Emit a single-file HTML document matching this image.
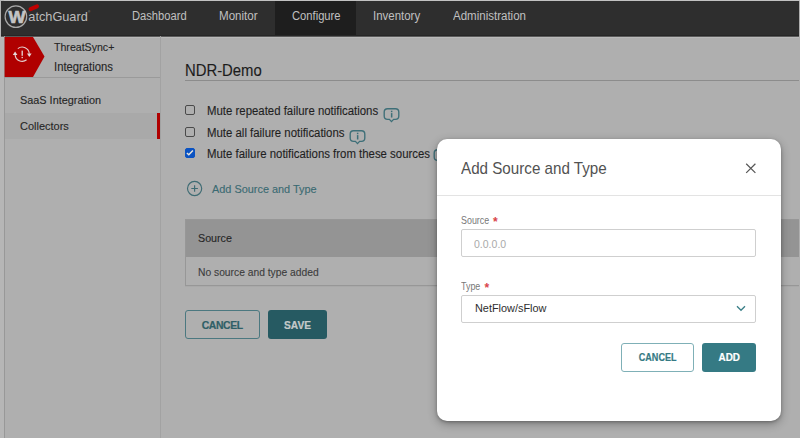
<!DOCTYPE html>
<html>
<head>
<meta charset="utf-8">
<style>
*{margin:0;padding:0;box-sizing:border-box}
html,body{width:800px;height:438px;overflow:hidden}
body{background:#afafaf;font-family:"Liberation Sans",sans-serif;position:relative;color:#222}
.a{position:absolute;white-space:nowrap}
.sx{display:inline-block;transform-origin:0 50%}
#hdr{left:1px;top:1px;width:798px;height:35px;background:#2e2e2e;border-bottom:1px solid #262626}
#cfg{left:275px;top:1px;width:81px;height:34px;background:#1e1e1e}
.nav{height:34px;line-height:32px;font-size:12px;color:#c0c0c0}
#side{left:4px;top:36px;width:157px;height:402px;border-left:1px solid #989898;border-right:1px solid #a2a2a2}
.st{color:#262626}
.cb{width:10px;height:10px;border:1.2px solid #4a4a4a;border-radius:2px;left:185px}
.ct{font-size:12px;color:#1f1f1f;left:207px;line-height:13px}
.teal{color:#3a6a72}
.btn{border-radius:3px;font-weight:bold;text-align:center;-webkit-text-stroke:0.2px currentColor}
#modal{left:437px;top:139px;width:344px;height:281.5px;background:#fff;border-radius:10px;box-shadow:0 1px 3px rgba(0,0,0,0.25),0 3px 10px rgba(0,0,0,0.3)}
.ct,.st,.tx{-webkit-text-stroke:0.12px currentColor}
</style>
</head>
<body>
<!-- header -->
<div class="a" style="left:0;top:0;width:800px;height:1px;background:#c2c2c2"></div>
<div class="a" style="left:0;top:0;width:4px;height:438px;background:#b6b6b6"></div>
<div class="a" id="hdr"></div>
<div class="a" id="cfg"></div>
<div class="a" style="left:1px;top:36px;width:798px;height:1px;background:#5a5a5a"></div>
<div class="a" style="left:1px;top:37px;width:798px;height:1px;background:#bababa"></div>
<!-- logo -->
<svg class="a" style="left:0;top:0" width="100" height="36" viewBox="0 0 100 36">
  <circle cx="15.9" cy="16.6" r="10.8" fill="none" stroke="#a9a9a9" stroke-width="1.2"/>
  <text x="8.4" y="22.6" font-family="Liberation Sans" font-weight="bold" font-size="15.8" fill="#c4c4c4" stroke="#c4c4c4" stroke-width="0.6" textLength="17" lengthAdjust="spacingAndGlyphs">W</text>
  <line x1="30.6" y1="9.1" x2="37" y2="6.4" stroke="#c20000" stroke-width="4" stroke-linecap="round"/>
  <text x="28.3" y="20.7" font-family="Liberation Sans" font-size="13.2" fill="#bcbcbc" textLength="59.5" lengthAdjust="spacingAndGlyphs">atchGuard</text>
  <text x="88" y="13" font-family="Liberation Sans" font-size="3" fill="#999">®</text>
</svg>
<div class="a nav" style="left:131.5px;top:-0.3px"><span class="sx" style="transform:scaleX(0.93)">Dashboard</span></div>
<div class="a nav" style="left:219px;top:-0.3px"><span class="sx" style="transform:scaleX(0.965)">Monitor</span></div>
<div class="a nav" style="left:291.5px;top:-0.3px"><span class="sx" style="transform:scaleX(0.933)">Configure</span></div>
<div class="a nav" style="left:373px;top:-0.3px"><span class="sx" style="transform:scaleX(0.955)">Inventory</span></div>
<div class="a nav" style="left:453px;top:-0.3px"><span class="sx" style="transform:scaleX(0.96)">Administration</span></div>

<!-- sidebar -->
<div class="a" id="side"></div>
<svg class="a" style="left:4px;top:36px" width="42" height="42" viewBox="0 0 42 42">
  <polygon points="0.6,1 29,1 40.5,20.5 29,41 0.6,41" fill="#b00000"/>
  <g fill="none" stroke="#e3d0d0" stroke-width="1.1">
    <path d="M13.83 12.6 A7.1 7.1 0 0 1 25.3 17.8"/>
    <path d="M22.6 23.8 A7.1 7.1 0 0 1 11.1 18.6"/>
  </g>
  <g fill="#e6dada">
    <polygon points="23,17.6 27.6,17.6 25.3,21"/>
    <polygon points="8.8,19 13.4,19 11.1,15.6"/>
    <rect x="17.55" y="14.6" width="1.3" height="5.2"/>
    <rect x="17.55" y="20.9" width="1.3" height="1.3"/>
  </g>
</svg>
<div class="a" style="left:5px;top:77px;width:155px;height:1px;background:#9a9a9a"></div>
<div class="a st" style="left:53.8px;top:40.8px;font-size:11.4px;line-height:12px"><span class="sx" style="transform:scaleX(0.93)">ThreatSync+</span></div>
<div class="a st" style="left:53.8px;top:61px;font-size:12px;line-height:12px"><span class="sx" style="transform:scaleX(0.94)">Integrations</span></div>
<div class="a st" style="left:20.4px;top:92.5px;font-size:11.7px;line-height:14px"><span class="sx" style="transform:scaleX(0.93)">SaaS Integration</span></div>
<div class="a" style="left:5px;top:113px;width:152px;height:25.5px;background:#a9a9a9"></div>
<div class="a" style="left:157px;top:113px;width:3px;height:26px;background:#b00000"></div>
<div class="a st" style="left:20.4px;top:118.8px;font-size:11.8px;line-height:14px"><span class="sx" style="transform:scaleX(0.93)">Collectors</span></div>

<!-- content -->
<div class="a tx" style="left:185px;top:62px;font-size:15.8px;line-height:17px;color:#1c1c1c"><span class="sx" style="transform:scaleX(0.94)">NDR-Demo</span></div>
<div class="a" style="left:185px;top:80px;width:614px;height:1px;background:#8c8c8c"></div>

<div class="a cb" style="top:105px"></div>
<div class="a ct" style="top:104.8px"><span class="sx" style="transform:scaleX(0.95)">Mute repeated failure notifications</span></div>
<div class="a cb" style="top:127px"></div>
<div class="a ct" style="top:126.6px"><span class="sx" style="transform:scaleX(0.95)">Mute all failure notifications</span></div>
<div class="a cb" style="top:148px;background:#0b53c2;border-color:#0b53c2"></div>
<svg class="a" style="left:185px;top:148px" width="10" height="10" viewBox="0 0 10 10"><path d="M1.9 5 L3.8 6.8 L7.9 2.5" fill="none" stroke="#e8e4dc" stroke-width="1.5"/></svg>
<div class="a ct" style="top:147.8px"><span class="sx" style="transform:scaleX(0.95)">Mute failure notifications from these sources</span></div>

<!-- info icons -->
<svg class="a" style="left:383px;top:107px" width="18" height="17" viewBox="0 0 18 17">
  <path d="M4.6 1.7 H12.4 A3.4 3.4 0 0 1 15.8 5.1 V9 A3.4 3.4 0 0 1 12.4 12.4 H10.6 L8.5 14.6 L6.4 12.4 H4.6 A3.4 3.4 0 0 1 1.2 9 V5.1 A3.4 3.4 0 0 1 4.6 1.7 Z" fill="none" stroke="#3e6f78" stroke-width="1.35"/>
  <rect x="7.9" y="3.7" width="1.5" height="1.5" fill="#3e6f78"/>
  <rect x="7.9" y="6.1" width="1.5" height="4.4" fill="#3e6f78"/>
</svg>
<svg class="a" style="left:349px;top:128.5px" width="18" height="17" viewBox="0 0 18 17">
  <path d="M4.6 1.7 H12.4 A3.4 3.4 0 0 1 15.8 5.1 V9 A3.4 3.4 0 0 1 12.4 12.4 H10.6 L8.5 14.6 L6.4 12.4 H4.6 A3.4 3.4 0 0 1 1.2 9 V5.1 A3.4 3.4 0 0 1 4.6 1.7 Z" fill="none" stroke="#3e6f78" stroke-width="1.35"/>
  <rect x="7.9" y="3.7" width="1.5" height="1.5" fill="#3e6f78"/>
  <rect x="7.9" y="6.1" width="1.5" height="4.4" fill="#3e6f78"/>
</svg>
<svg class="a" style="left:433px;top:148px" width="18" height="17" viewBox="0 0 18 17">
  <path d="M4.6 1.7 H12.4 A3.4 3.4 0 0 1 15.8 5.1 V9 A3.4 3.4 0 0 1 12.4 12.4 H10.6 L8.5 14.6 L6.4 12.4 H4.6 A3.4 3.4 0 0 1 1.2 9 V5.1 A3.4 3.4 0 0 1 4.6 1.7 Z" fill="none" stroke="#3e6f78" stroke-width="1.35"/>
</svg>

<!-- add source link -->
<svg class="a" style="left:186px;top:180px" width="18" height="18" viewBox="0 0 18 18">
  <circle cx="8.6" cy="8.5" r="7.1" fill="none" stroke="#3e6b73" stroke-width="1.15"/>
  <path d="M8.6 5.3 V11.7 M5.3 8.5 H11.9" stroke="#3e6b73" stroke-width="1.15"/>
</svg>
<div class="a teal tx" style="left:212.3px;top:182px;font-size:11.6px;line-height:13px"><span class="sx" style="transform:scaleX(0.94)">Add Source and Type</span></div>

<!-- table -->
<div class="a" style="left:185px;top:219px;width:614px;height:67px;border:1px solid #979797;border-right:none"></div>
<div class="a" style="left:186px;top:220px;width:613px;height:37px;background:#949494"></div>
<div class="a" style="left:185px;top:286px;width:614px;height:1px;background:#a9a9a9"></div>
<div class="a tx" style="left:197.7px;top:232px;font-size:11.4px;line-height:13px;color:#262626"><span class="sx" style="transform:scaleX(0.94)">Source</span></div>
<div class="a tx" style="left:197.7px;top:265.5px;font-size:11.4px;line-height:13px;color:#3c3c3c"><span class="sx" style="transform:scaleX(0.903)">No source and type added</span></div>

<!-- buttons -->
<div class="a btn teal" style="left:184.5px;top:310px;width:75.5px;height:28.5px;border:1px solid #4b7880;font-size:10.4px;letter-spacing:-0.35px;line-height:26px;padding-top:2px;color:#2f5f67">CANCEL</div>
<div class="a btn" style="left:268px;top:310px;width:59px;height:28.5px;background:#265a62;color:#c4c9ca;font-size:10.2px;line-height:28px;padding-top:2px">SAVE</div>

<!-- modal -->
<div class="a" id="modal"></div>
<div class="a" style="left:461.3px;top:159px;font-size:16.2px;line-height:18px;color:#525252"><span class="sx" style="transform:scaleX(0.938)">Add Source and Type</span></div>
<svg class="a" style="left:744px;top:162px" width="13" height="12" viewBox="0 0 13 12">
  <path d="M2.2 1.8 L11.4 10.9 M11.4 1.8 L2.2 10.9" stroke="#555" stroke-width="1.2"/>
</svg>
<div class="a" style="left:437px;top:195px;width:344px;height:1px;background:#e3e3e3"></div>

<div class="a" style="left:461.4px;top:215.3px;font-size:10.3px;line-height:12px;color:#777"><span class="sx" style="transform:scaleX(0.865)">Source</span></div>
<div class="a" style="left:493px;top:215.5px;font-size:12px;font-weight:bold;line-height:12px;color:#d9454a">*</div>
<div class="a" style="left:461px;top:229px;width:295px;height:28px;border:1px solid #cfcfcf;border-radius:2px"></div>
<div class="a" style="left:474.3px;top:237.5px;font-size:11.2px;line-height:12px;color:#aaa"><span class="sx" style="transform:scaleX(0.94)">0.0.0.0</span></div>

<div class="a" style="left:461.4px;top:281.2px;font-size:10.3px;line-height:12px;color:#777"><span class="sx" style="transform:scaleX(0.865)">Type</span></div>
<div class="a" style="left:484.4px;top:281.5px;font-size:12px;font-weight:bold;line-height:12px;color:#d9454a">*</div>
<div class="a" style="left:461px;top:294.5px;width:295px;height:28px;border:1px solid #cfcfcf;border-radius:2px"></div>
<div class="a" style="left:474.9px;top:302.3px;font-size:11.6px;line-height:12px;color:#2e2e2e"><span class="sx" style="transform:scaleX(0.94)">NetFlow/sFlow</span></div>
<svg class="a" style="left:736px;top:305px" width="10" height="7" viewBox="0 0 10 7">
  <path d="M1 1.2 L5 5.3 L9 1.2" fill="none" stroke="#3a7f88" stroke-width="1.3"/>
</svg>

<div class="a btn" style="left:621px;top:343px;width:73px;height:28.5px;border:1px solid #7fb0b7;color:#357a84;font-size:10.4px;line-height:26px;padding-top:1px"><span class="sx" style="transform:scaleX(0.87);transform-origin:50% 50%">CANCEL</span></div>
<div class="a btn" style="left:702px;top:343px;width:54px;height:28.5px;background:#357a84;color:#fff;font-size:10.4px;line-height:28.5px;padding-top:1px"><span class="sx" style="transform:scaleX(0.95);transform-origin:50% 50%">ADD</span></div>
</body>
</html>
